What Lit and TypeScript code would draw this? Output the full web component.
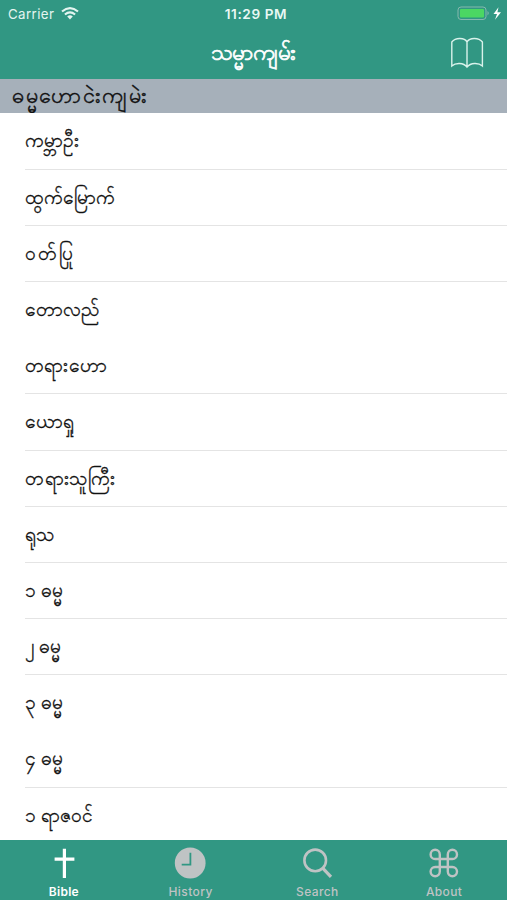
import { LitElement, html, svg, css } from "lit";

interface Book { name: string; rule?: boolean; spacing?: number; }

const books: Book[] = [
  { name: "ကမ္ဘာဦး" },
  { name: "ထွက်မြောက်" },
  { name: "ဝတ်ပြု", spacing: 1.8 },
  { name: "တောလည်", rule: false },
  { name: "တရားဟော", spacing: 0.4 },
  { name: "ယောရှု" },
  { name: "တရားသူကြီး", spacing: 0.7 },
  { name: "ရုသ" },
  { name: "၁ ဓမ္မ" },
  { name: "၂ ဓမ္မ" },
  { name: "၃ ဓမ္မ", rule: false },
  { name: "၄ ဓမ္မ" },
  { name: "၁ ရာဇဝင်", rule: false },
];

const tabs = [
  { label: "Bible", icon: svg`<path d="M17.4 2.8V32M7.6 13.2H27.4" stroke-width="3.2"/>` },
  { label: "History", icon: svg`<circle cx="16.2" cy="17" r="15.4" fill="currentColor" stroke="none"/><path d="M16.4 6.8V18.6H7.7" stroke="#319783" stroke-width="1.8"/>` },
  { label: "Search", icon: svg`<circle cx="14.2" cy="14.4" r="10.8" stroke-width="2.6"/><path d="M21.7 22.2L30 30.8" stroke-width="3.2"/>` },
  { label: "About", icon: svg`<path d="M11.8 13H19.8V21H11.8ZM11.8 13V8.4A4.6 4.6 0 1 0 7.2 13H11.8M19.8 13V8.4A4.6 4.6 0 1 1 24.4 13H19.8M11.8 21V25.6A4.6 4.6 0 1 1 7.2 21H11.8M19.8 21V25.6A4.6 4.6 0 1 0 24.4 21H19.8" stroke-width="2.4"/>` },
];

class AppRoot extends LitElement {
  static styles = css`
    :host { display: flex; flex-direction: column; width: 507px; height: 900px; overflow: hidden; background: #fff; color: #111; font-family: "Inter", "Noto Sans", sans-serif; }
    * { box-sizing: border-box; }
    svg { display: block; fill: none; stroke: currentColor; }
    .top { height: 79px; flex: none; background: #319783; color: #fff; }
    .status { display: grid; grid-template-columns: 1fr auto 1fr; height: 27px; padding: 0 5px 0 8px; align-items: center; font-size: 13.3px; letter-spacing: .4px; }
    .carrier { display: flex; align-items: center; gap: 7px; color: #e4f5f0; }
    .time { font-weight: 600; color: #e9f8f4; font-size: 13.6px; letter-spacing: .6px; padding-left: 2px; }
    .power { justify-self: end; }
    .nav { display: grid; grid-template-columns: 1fr auto 1fr; height: 52px; align-items: center; padding: 0 23px; }
    .title { grid-column: 2; font: 400 22.6px/32px "Noto Sans", sans-serif; -webkit-text-stroke: .7px currentColor; margin-top: -3px; }
    .book { justify-self: end; color: #d9f2eb; margin-top: -1px; }
    .section { height: 34px; flex: none; background: #a6b0ba; padding-left: 12px; font: 400 21.5px/31px "Noto Sans", sans-serif; letter-spacing: 1.6px; -webkit-text-stroke: .45px currentColor; white-space: nowrap; overflow: hidden; }
    .list { flex: 1; min-height: 0; overflow: hidden; padding-top: .4px; }
    .row { height: 56.2px; margin-left: 25px; border-bottom: 1px solid #e4e4e4; font: 400 19px/54px "Noto Sans", sans-serif; -webkit-text-stroke: .35px currentColor; }
    .row.plain { border-color: transparent; }
    .tabs { height: 60px; flex: none; display: grid; grid-template-columns: repeat(4, 1fr); background: #319783; color: #bfc3c4; }
    .tab { display: flex; flex-direction: column; align-items: center; padding: 6px 0 0 1px; font-size: 12px; font-weight: 500; line-height: 16px; letter-spacing: .4px; gap: 5px; }
    .tab.active { color: #fff; font-weight: 600; letter-spacing: .3px; }
  `;

  render() {
    return html`
      <header class="top">
        <div class="status">
          <span class="carrier">Carrier
            <svg width="18" height="13" viewBox="0 0 18 13"><path d="M1 4.5Q9-2.3 17 4.5M3.9 7.5Q9 3.2 14.1 7.5" stroke-width="2.1"/><path d="M6.2 9.5Q9 7.2 11.8 9.5L9 12.6Z" fill="currentColor" stroke="none"/></svg>
          </span>
          <span class="time">11:29 PM</span>
          <svg class="power" width="45" height="15" viewBox="0 0 45 15">
            <rect x="1" y="1" width="28" height="12.5" rx="3" stroke="#86b8ae"/>
            <rect x="3" y="3" width="24" height="8.6" rx="1" fill="#4bd763" stroke="none"/>
            <path d="M30.5 5Q33 7.2 30.5 9.5Z" fill="#86b8ae" stroke="none"/>
            <path d="M41.5 1.2L36.5 8H40L38 13.8L44 6.3H40.4Z" fill="currentColor" stroke="none"/>
          </svg>
        </div>
        <div class="nav">
          <span class="title">သမ္မာကျမ်း</span>
          <svg class="book" width="34" height="32" viewBox="0 0 34 32"><path d="M17 4.8C14.6 .6 5.6 .1 1.8 5V29C5.6 25.5 13.6 25.5 17 30C20.6 25.5 28.6 25.5 32.4 29V5C28.6 .1 19.6 .6 17 4.8V30" stroke-width="1.4"/></svg>
        </div>
      </header>
      <div class="section">ဓမ္မဟောငဲးကျမဲး</div>
      <main class="list">
        ${books.map((b) => html`<div class="row ${b.rule === false ? "plain" : ""}" style="letter-spacing:${b.spacing ?? 0}px">${b.name}</div>`)}
      </main>
      <nav class="tabs">
        ${tabs.map((t, i) => html`<div class="tab ${i === 0 ? "active" : ""}"><svg width="33" height="33" viewBox="0 0 33 33">${t.icon}</svg><span>${t.label}</span></div>`)}
      </nav>
    `;
  }
}
customElements.define("app-root", AppRoot);
